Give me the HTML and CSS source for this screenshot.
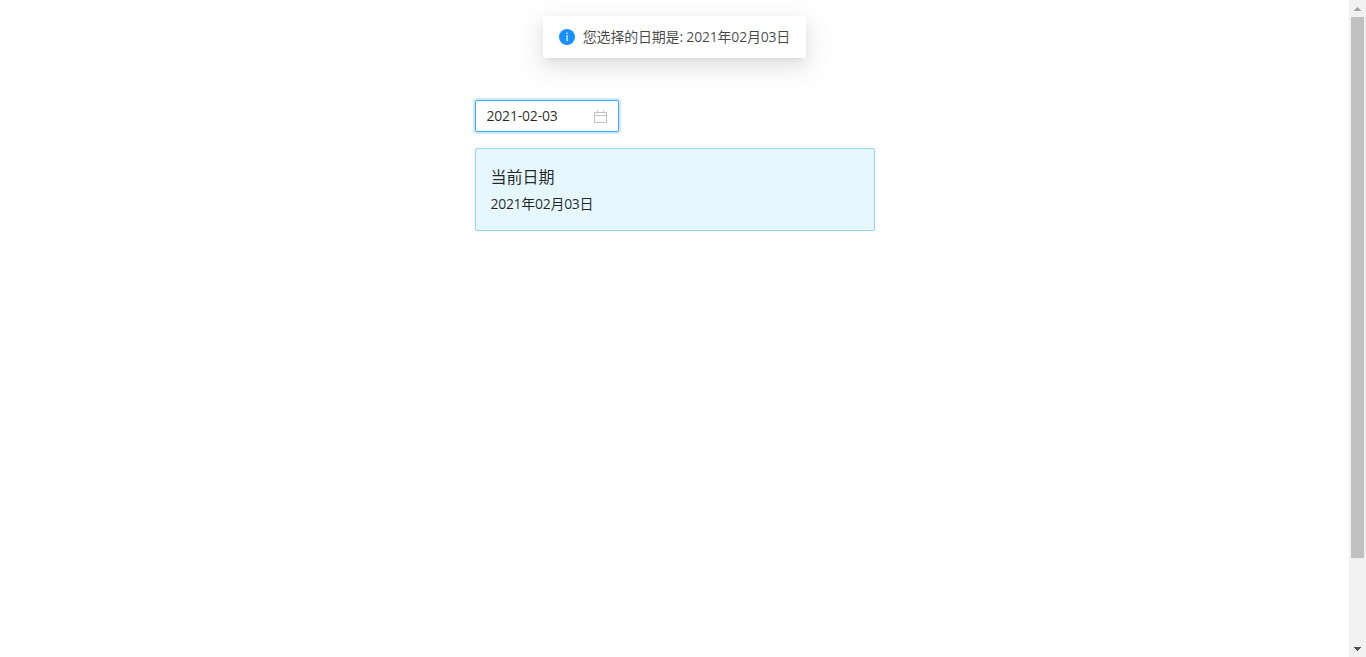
FILE: index.html
```html
<!DOCTYPE html>
<html>

<head>
    <meta charset="UTF-8">
    <meta name="viewport" content="width=device-width,initial-scale=1">
    <link rel="stylesheet" href="styles.css">
    <title>DatePicker</title>
</head>

<body>
    <div class="main">
        <div class="message">
            <div class="message-notice">
                <svg class="message-icon" viewBox="0 0 16 16" width="16" height="16">
                    <circle cx="8" cy="8" r="8" fill="#1890ff"></circle>
                    <rect x="7.3" y="3.6" width="1.5" height="1.5" fill="#cfe8ff"></rect>
                    <rect x="7.3" y="6.2" width="1.5" height="6" fill="#cfe8ff"></rect>
                </svg>
                <span>您选择的日期是: 2021年02月03日</span>
            </div>
        </div>
        <div class="page">
            <div class="picker">
                <input class="picker-input" type="text" value="2021-02-03" readonly>
                <svg class="picker-icon" viewBox="0 0 13 13" width="13" height="13" fill="none" stroke="#c4c4c4" stroke-width="1">
                    <rect x="0.5" y="2.5" width="12" height="10"></rect>
                    <path d="M0.5 5.5H12.5M3.5 0V3.5M9.5 0V3.5"></path>
                </svg>
            </div>
            <div class="alert">
                <div class="alert-title">当前日期</div>
                <div class="alert-text">2021年02月03日</div>
            </div>
        </div>
    </div>
    <div class="scrollbar">
        <div class="scrollbar-button">
            <svg viewBox="0 0 7 4" width="7" height="4" shape-rendering="crispEdges">
                <path d="M3 0H4V1H5V2H6V3H7V4H0V3H1V2H2V1H3z" fill="#a3a3a3"></path>
            </svg>
        </div>
        <div class="scrollbar-thumb"></div>
        <div class="scrollbar-rest"></div>
        <div class="scrollbar-button">
            <svg viewBox="0 0 7 4" width="7" height="4" shape-rendering="crispEdges">
                <path d="M0 0H7V1H6V2H5V3H4V4H3V3H2V2H1V1H0z" fill="#505050"></path>
            </svg>
        </div>
    </div>
</body>

</html>
```

FILE: styles.css
```css
*,
*::before,
*::after {
    box-sizing: border-box;
    padding: 0;
    margin: 0;
}

body {
    display: flex;
    height: 100vh;
    overflow: hidden;
    background: #fff;
    color: rgba(0, 0, 0, 0.85);
    font-family: "Open Sans", "Noto Sans CJK SC", sans-serif;
    font-size: 14px;
    line-height: 22px;
}

.main {
    position: relative;
    flex: 1;
    min-width: 0;
}

.message {
    position: absolute;
    top: 16px;
    left: 0;
    width: 100%;
    display: flex;
    justify-content: center;
}

.message-notice {
    display: flex;
    align-items: center;
    height: 42px;
    padding: 0 16px;
    background: #fff;
    border-radius: 2px;
    box-shadow: 0 3px 6px -4px rgba(0, 0, 0, 0.12), 0 6px 16px 0 rgba(0, 0, 0, 0.08), 0 9px 28px 8px rgba(0, 0, 0, 0.05);
    color: rgba(0, 0, 0, 0.72);
    letter-spacing: -0.2px;
    white-space: nowrap;
}

.message-icon {
    flex: none;
    margin-right: 8px;
}

.page {
    width: 400px;
    margin: 0 auto;
    padding-top: 100px;
}

.picker {
    display: flex;
    align-items: center;
    width: 144px;
    height: 32px;
    padding: 0 11px;
    border: 1px solid #40a9ff;
    border-radius: 2px;
    box-shadow: 0 0 0 2px rgba(24, 144, 255, 0.2);
}

.picker-input {
    flex: 1;
    min-width: 0;
    border: none;
    outline: none;
    background: transparent;
    color: rgba(0, 0, 0, 0.85);
    font: inherit;
    letter-spacing: -0.2px;
}

.picker-icon {
    flex: none;
    margin-top: 1px;
}

.alert {
    margin-top: 16px;
    height: 83px;
    padding: 16px 15px 0;
    background: #e6f7ff;
    border: 1px solid #91d5ff;
    border-radius: 2px;
}

.alert-title {
    margin-bottom: 4px;
    font-size: 16px;
    line-height: 24px;
}

.alert-text {
    letter-spacing: -0.3px;
}

.scrollbar {
    display: flex;
    flex-direction: column;
    flex: none;
    width: 17px;
    background: #f1f1f1;
}

.scrollbar-button {
    display: flex;
    align-items: center;
    justify-content: center;
    flex: none;
    height: 17px;
}

.scrollbar-thumb {
    flex: none;
    height: 541px;
    margin: 0 2px;
    background: #c1c1c1;
}

.scrollbar-rest {
    flex: 1;
}
```
